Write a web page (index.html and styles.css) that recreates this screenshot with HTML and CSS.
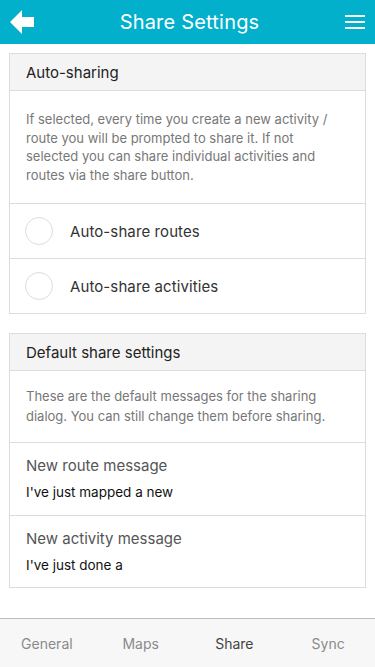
FILE: index.html
```html
<!DOCTYPE html>
<html>
<head>
<meta charset="utf-8">
<link rel="stylesheet" href="styles.css">
</head>
<body>
<div class="app">
  <header class="topbar">
    <button class="icon-btn back" aria-label="Back">
      <svg width="24" height="24" viewBox="0 0 24 24"><path d="M0 12 L12 0 L12 7 L24 7 L24 17 L12 17 L12 24 Z" fill="#fff"/></svg>
    </button>
    <h1 class="title">Share Settings</h1>
    <button class="icon-btn menu" aria-label="Menu">
      <svg width="20" height="16" viewBox="0 0 20 16"><rect x="0" y="1" width="20" height="2" fill="#fff"/><rect x="0" y="7" width="20" height="2" fill="#fff"/><rect x="0" y="13" width="20" height="2" fill="#fff"/></svg>
    </button>
  </header>

  <main class="content">
    <section class="card">
      <div class="card-head">Auto-sharing</div>
      <p class="card-desc">If selected, every time you create a new activity / route you will be prompted to share it. If not selected you can share individual activities and routes via the share button.</p>
      <div class="radio-row"><span class="radio"></span><span class="radio-label">Auto-share routes</span></div>
      <div class="radio-row"><span class="radio"></span><span class="radio-label">Auto-share activities</span></div>
    </section>

    <section class="card">
      <div class="card-head">Default share settings</div>
      <p class="card-desc short">These are the default messages for the sharing dialog. You can still change them before sharing.</p>
      <div class="msg-row">
        <div class="msg-label">New route message</div>
        <div class="msg-value">I've just mapped a new</div>
      </div>
      <div class="msg-row">
        <div class="msg-label">New activity message</div>
        <div class="msg-value">I've just done a</div>
      </div>
    </section>
  </main>

  <nav class="tabbar">
    <span class="tab">General</span>
    <span class="tab">Maps</span>
    <span class="tab active">Share</span>
    <span class="tab">Sync</span>
  </nav>
</div>
</body>
</html>
```

FILE: styles.css
```css
* { box-sizing: border-box; }
html, body { margin: 0; padding: 0; }
body {
  font-family: "Inter", "Roboto", "Liberation Sans", sans-serif;
  background: #fff;
  color: #333;
}
.app {
  width: 375px;
  height: 667px;
  display: flex;
  flex-direction: column;
  overflow: hidden;
}
.topbar {
  height: 44px;
  flex: none;
  background: #02b0cc;
  display: flex;
  align-items: center;
  justify-content: space-between;
  padding: 0 10px;
}
.icon-btn {
  background: none;
  border: 0;
  padding: 0;
  display: flex;
  align-items: center;
  width: 24px;
  height: 24px;
}
.menu { width: 20px; height: 16px; }
.title {
  margin: 0;
  font-size: 20px;
  font-weight: 400;
  color: #fff;
  letter-spacing: 0.2px;
}
.content {
  flex: 1;
  padding: 9px 9px 0;
  display: flex;
  flex-direction: column;
  gap: 19px;
}
.card {
  border: 1px solid #dcdcdc;
}
.card-head {
  height: 37px;
  background: #f4f4f4;
  border-bottom: 1px solid #dcdcdc;
  padding: 0 16px;
  display: flex;
  align-items: center;
  font-size: 15px;
  color: #222;
}
.card-desc {
  margin: 0;
  padding: 19px 16px 19px;
  font-size: 13px;
  line-height: 18.5px;
  color: #777;
  border-bottom: 1px solid #dcdcdc;
}
.card-desc.short { padding: 15px 16px 16px; line-height: 20px; }
.radio-row {
  height: 55px;
  display: flex;
  align-items: center;
  padding-left: 15px;
  border-bottom: 1px solid #dcdcdc;
}
.radio-row:last-child { border-bottom: 0; height: 54px; }
.radio {
  width: 28px;
  height: 28px;
  border-radius: 50%;
  border: 1px solid #dcdcdc;
  flex: none;
}
.radio-label {
  margin-left: 17px;
  font-size: 15px;
  color: #333;
  letter-spacing: 0.1px;
}
.msg-row {
  height: 73px;
  padding: 13px 16px 0;
  border-bottom: 1px solid #dcdcdc;
}
.msg-row:last-child { border-bottom: 0; height: 71px; }
.msg-label {
  font-size: 15px;
  color: #555;
  line-height: 20px;
}
.msg-value {
  margin-top: 7px;
  font-size: 13.5px;
  color: #111;
  line-height: 18px;
}
.tabbar {
  height: 49px;
  flex: none;
  background: #f7f7f7;
  border-top: 1px solid #bdbdbd;
  display: grid;
  grid-template-columns: repeat(4, 1fr);
  align-items: center;
}
.tab {
  text-align: center;
  font-size: 14px;
  color: #8a8a8a;
}
.tab.active { color: #444; }
```
